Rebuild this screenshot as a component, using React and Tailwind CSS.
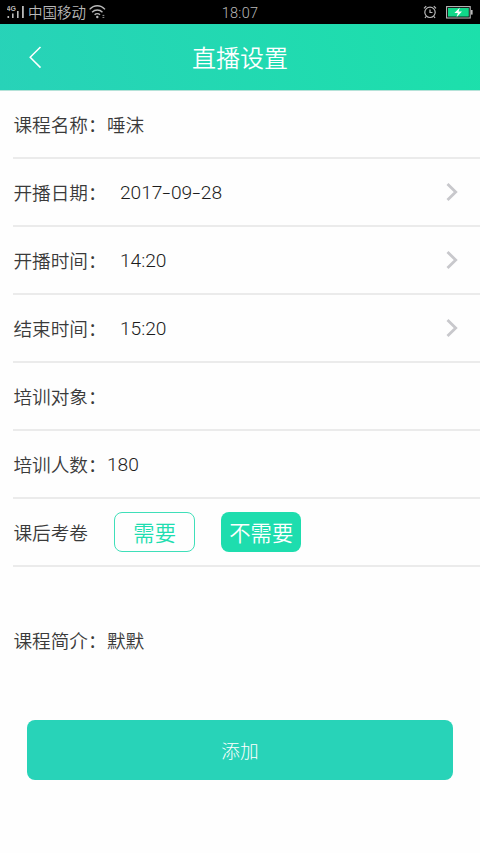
const ROWS = [
  { label: '课程名称：', value: '唾沫' },
  { label: '开播日期：', value: '2017-09-28', numeric: true, picker: true },
  { label: '开播时间：', value: '14:20', numeric: true, picker: true },
  { label: '结束时间：', value: '15:20', numeric: true, picker: true },
  { label: '培训对象：', value: '' },
  { label: '培训人数：', value: '180', numeric: true },
];

function StatusBar() {
  return (
    <div className="relative flex h-6 items-center justify-between bg-black text-[#b9b9b9]">
      <div className="flex items-center pl-[7px]">
        <svg className="h-4 w-[18px]" viewBox="0 0 18 16" fill="currentColor">
          <text x="-0.5" y="6.8" fontSize="7" fontWeight="bold" fontFamily="Liberation Sans, sans-serif">4G</text>
          <rect x="0.5" y="12" width="1.6" height="2" />
          <rect x="5" y="9.5" width="1.6" height="4.5" />
          <rect x="10" y="7" width="1.6" height="7" />
          <rect x="15" y="2" width="1.8" height="12" />
        </svg>
        <span className="ml-[3px] pt-[3px] text-[14.5px] leading-6">中国移动</span>
        <svg className="ml-[3px] h-4 w-[17px]" viewBox="0 0 17 16" fill="none" stroke="currentColor" strokeWidth="1.4">
          <path d="M0.6 5.4C5 0.6 11.6 0.6 16 5.4M3.1 8.2C6 5.2 10.6 5.2 13.5 8.2M5.6 10.8C7.2 9.2 9.4 9.2 11 10.8" />
          <circle cx="8.3" cy="13" r="1.2" fill="currentColor" stroke="none" />
          <path d="M13.5 11.4h1.8M13.5 13.4h1.8" strokeWidth="0.8" />
        </svg>
      </div>
      <span className="absolute inset-x-0 top-[2px] text-center text-[14.5px] leading-6 tracking-[0.3px]">
        18:07
      </span>
      <div className="flex items-center gap-[9px] pr-[7px]">
        <svg className="h-[14px] w-[14px]" viewBox="0 0 14 14" fill="none" stroke="currentColor" strokeWidth="1.2">
          <circle cx="7" cy="7.3" r="5.2" />
          <path d="M7 4.5v3h2.5M1 3.4L3.2 1.2M13 3.4L10.8 1.2M3 11.5L2 13M11 11.5L12 13" />
        </svg>
        <svg className="h-[13px] w-[27px]" viewBox="0 0 27 13">
          <rect x="0.6" y="0.6" width="23.6" height="11.4" fill="none" stroke="#b9b9b9" strokeWidth="1.1" />
          <rect x="2" y="2" width="20.8" height="8.6" fill="#10d889" />
          <rect x="25" y="4" width="1.6" height="4.6" fill="#b9b9b9" />
          <path d="M13.8 1.6L8.4 7h3.4l-1.2 4.2L16 5.6h-3.4z" fill="#fff" />
        </svg>
      </div>
    </div>
  );
}

function Row({ label, value, numeric, picker }) {
  return (
    <div className="flex h-[68px] items-center border-b-2 border-[#ebebeb] pr-[22px]">
      <span className="w-[93.5px] pt-[3px] whitespace-nowrap">{label}</span>
      <span
        className={`pt-[3px] whitespace-nowrap ${picker ? 'ml-[13px]' : ''} ${
          numeric ? 'text-[19.2px] text-[#1c1c1c]' : ''
        }`}
      >
        {value.split('-').map((part, i) => (
          <span key={i}>
            {i > 0 && <span className="inline-block w-[8.5px] scale-x-150 text-center">-</span>}
            {part}
          </span>
        ))}
      </span>
      {picker && (
        <svg className="ml-auto h-5 w-3" viewBox="0 0 12 20" fill="none" stroke="#c8c8cc" strokeWidth="2.8">
          <path d="M1.5 2l8.2 8-8.2 8" />
        </svg>
      )}
    </div>
  );
}

export default function App() {
  return (
    <div className="min-h-[853px] w-full bg-[#fefefe] font-['Roboto','Noto_Sans_CJK_SC',sans-serif] text-[18.67px] font-[350] text-[#3a3a3a]">
      <StatusBar />
      <header className="flex h-[67px] items-center border-b border-[#b5e2d8] bg-linear-[75deg] from-[#28d2b8] to-[#1ce0ab] text-white">
        <button className="ml-7 w-[52px]">
          <svg className="h-6 w-4" viewBox="0 0 16 24" fill="none" stroke="currentColor" strokeWidth="1.5">
            <path d="M12.5 2L2.2 12.3l10.3 10.3" />
          </svg>
        </button>
        <h1 className="flex-1 pt-1 text-center text-2xl">直播设置</h1>
        <div className="w-20" />
      </header>

      <main className="pl-[13.4px]">
        {ROWS.map((row) => (
          <Row key={row.label} {...row} />
        ))}

        <div className="flex h-[68px] items-center border-b-2 border-[#ebebeb]">
          <span className="w-[101px] pt-[3px]">课后考卷</span>
          <button className="h-10 w-[80.5px] rounded-lg border border-[#3fdfb9] pt-[3px] text-[21.33px] text-[#1eddb0]">需要</button>
          <button className="ml-[26.4px] h-10 w-[80px] rounded-lg bg-[#1eddae] pt-[3px] text-[21.33px] text-white">不需要</button>
        </div>

        <div className="mt-[41px] flex h-[66px] items-center pt-0.5">
          <span className="w-[93.5px] whitespace-nowrap">课程简介：</span>
          <span>默默</span>
        </div>
      </main>

      <button className="mx-[26.67px] mt-[46px] block h-[60px] w-[426.67px] rounded-lg bg-[#28d3b8] pt-[3px] font-light text-white">
        添加
      </button>
    </div>
  );
}
